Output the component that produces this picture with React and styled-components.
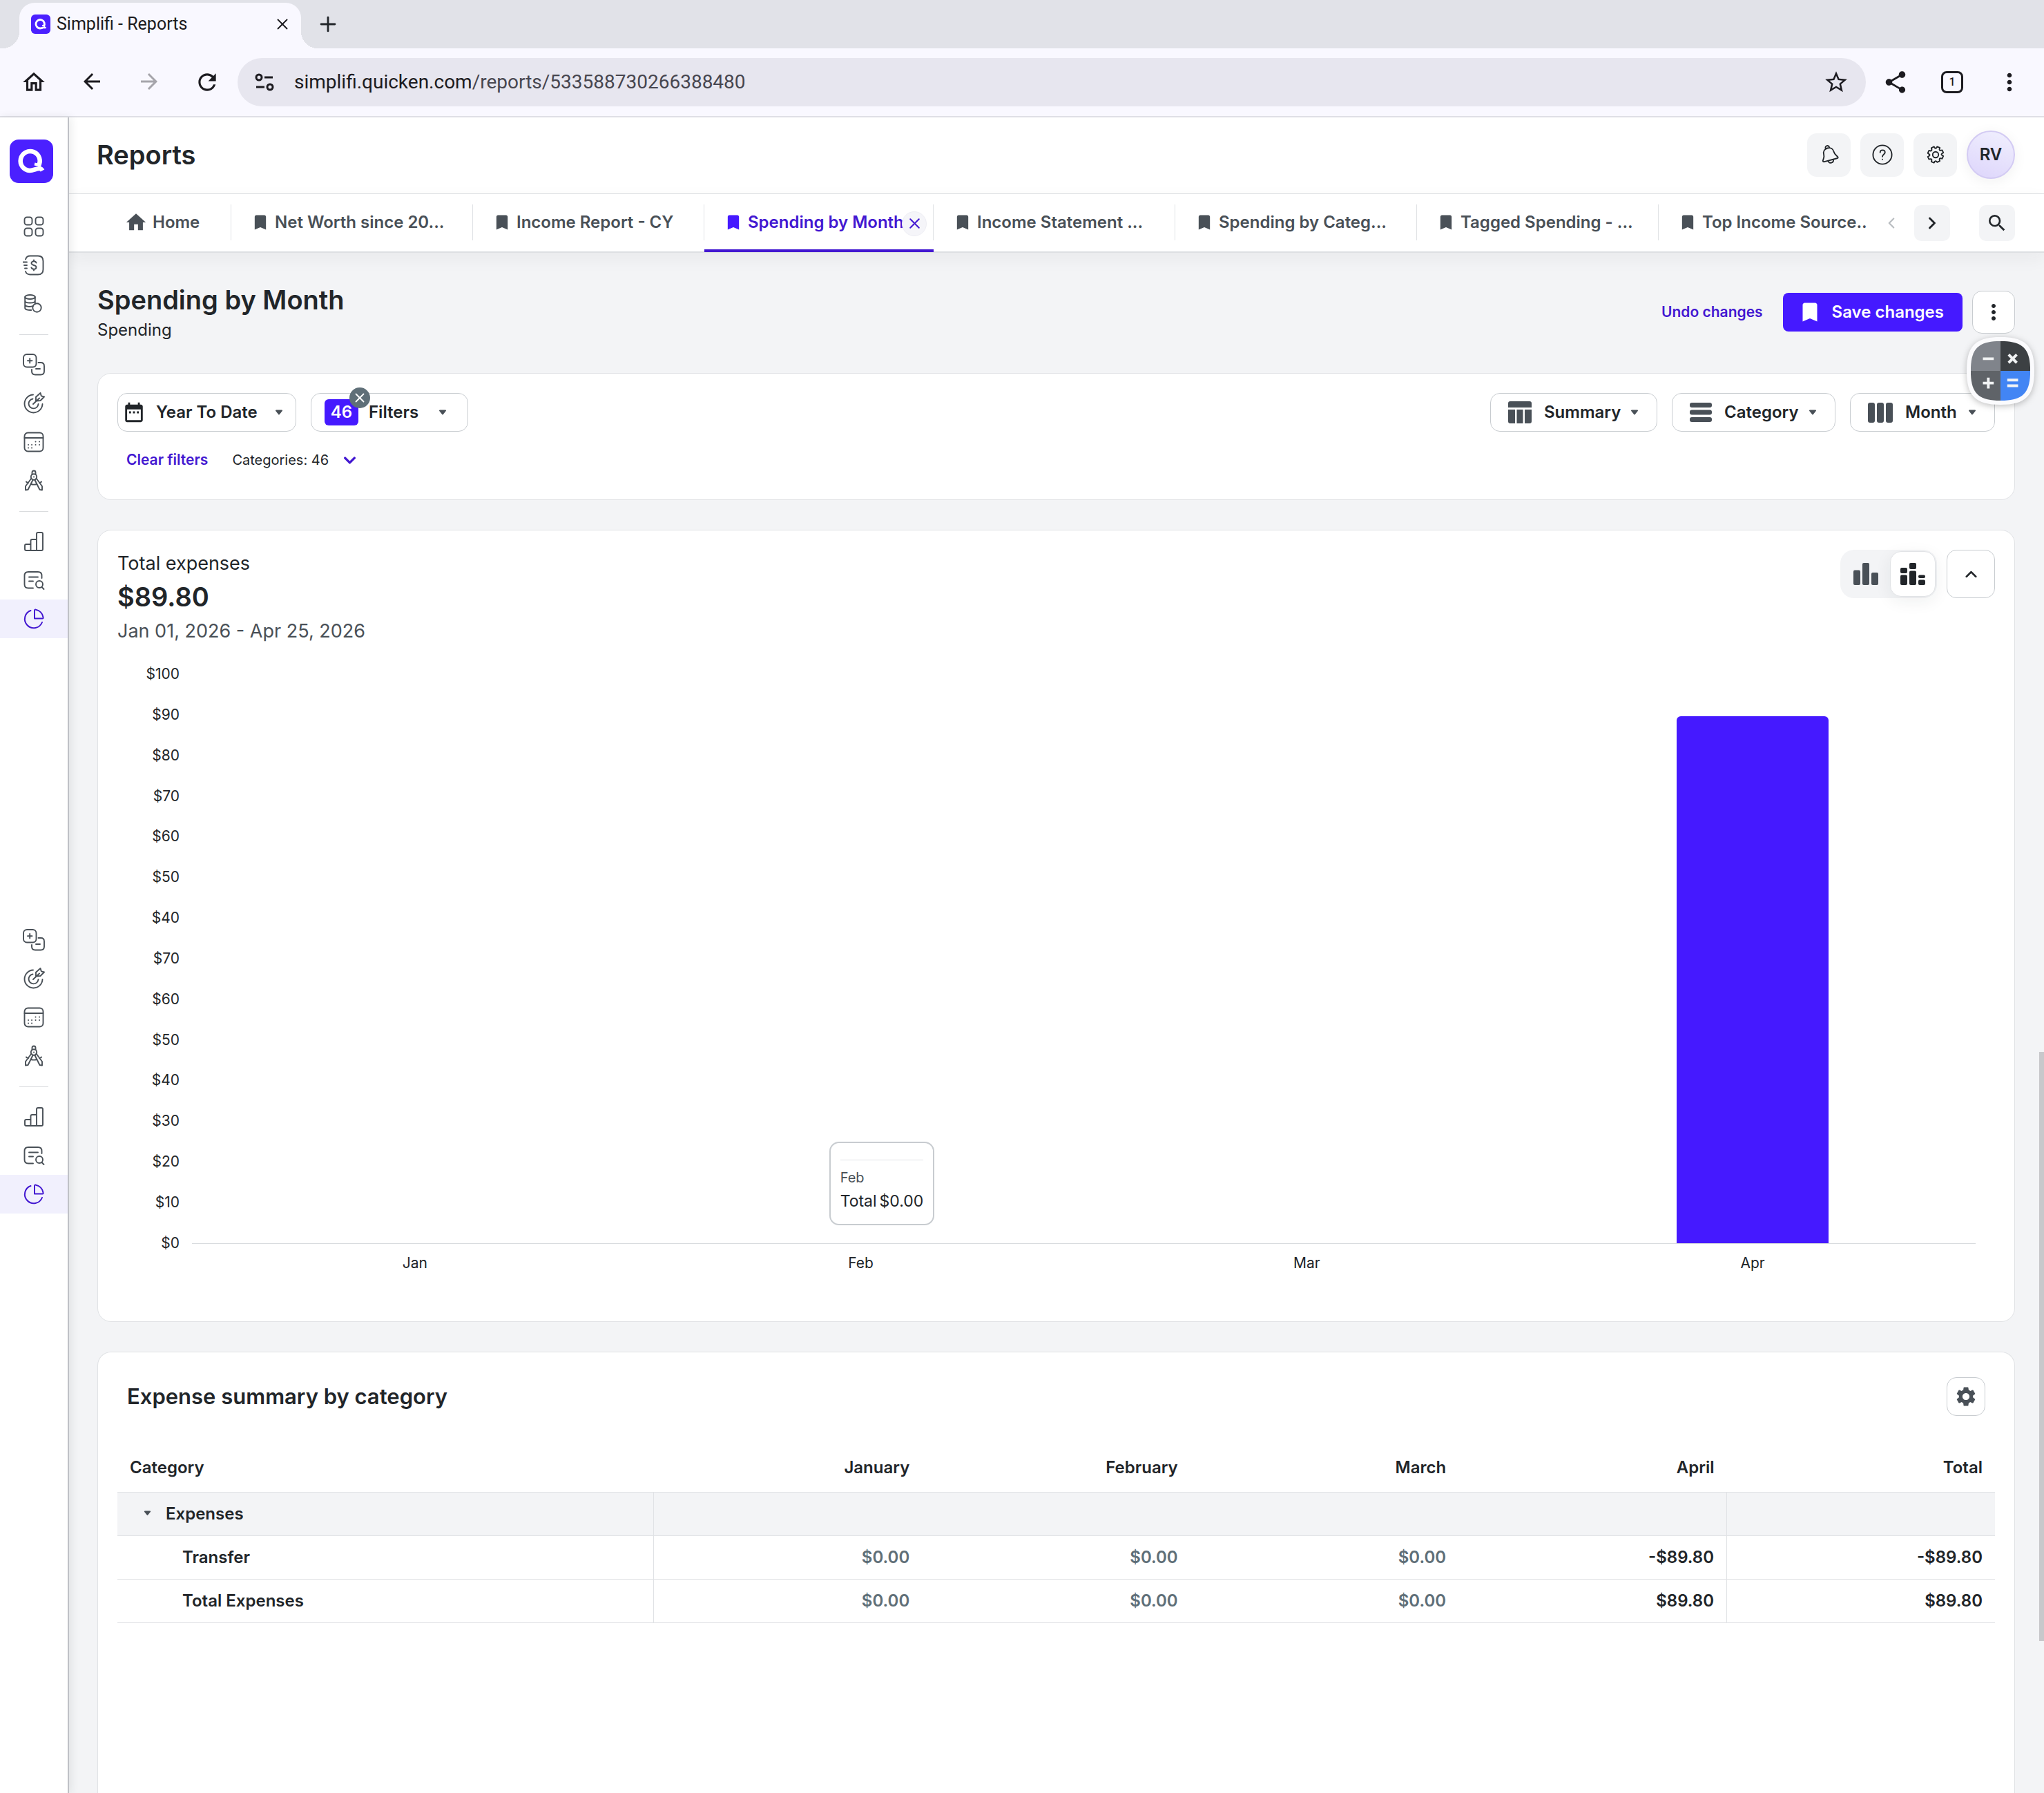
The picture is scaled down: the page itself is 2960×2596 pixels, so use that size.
import React, { useState } from 'react';
import styled, { createGlobalStyle, css } from 'styled-components';
import {
  MdArrowBack,
  MdArrowForward,
  MdBookmark,
  MdDateRange,
  MdHome,
  MdMoreVert,
  MdOutlineHome,
  MdRefresh,
  MdSearch,
  MdSettings,
  MdShare,
  MdStarOutline,
} from 'react-icons/md';
import { LuChevronDown, LuChevronLeft, LuChevronRight, LuChevronUp, LuPlus, LuX } from 'react-icons/lu';

const colors = {
  brand: '#4519ff',
  link: '#4318d1',
  text: '#212529',
  muted: '#495057',
  faint: '#5f6f78',
  line: '#e0e2e5',
  border: '#c8ccd0',
  page: '#f3f4f6',
  chrome: '#f9f8ff',
};

const GlobalStyle = createGlobalStyle`
  *, *::before, *::after {
    box-sizing: border-box;
  }

  body {
    margin: 0;
    background: ${colors.page};
    color: ${colors.text};
    font-family: Inter, 'Open Sans', sans-serif;
    font-size: 24px;
    line-height: 36px;
  }

  button {
    margin: 0;
    padding: 0;
    border: 0;
    background: none;
    color: inherit;
    font: inherit;
    cursor: pointer;
  }

  a {
    color: inherit;
    text-decoration: none;
  }

  h1, h2, p {
    margin: 0;
  }

  svg {
    display: block;
    flex-shrink: 0;
  }
`;

const Page = styled.div`
  position: relative;
  display: flex;
  flex-direction: column;
  min-height: 100vh;
`;

/* Browser frame */

const TabStrip = styled.div`
  display: flex;
  align-items: flex-end;
  height: 70px;
  padding-left: 28px;
  background: #e1e2e8;
  font-family: Roboto, sans-serif;
`;

const BrowserTab = styled.div`
  position: relative;
  display: flex;
  align-items: center;
  width: 408px;
  height: 66px;
  padding: 0 14px 4px 17px;
  border-radius: 22px 22px 0 0;
  background: ${colors.chrome};
  color: #1c1b20;

  &::before,
  &::after {
    content: '';
    position: absolute;
    bottom: 0;
    width: 24px;
    height: 24px;
  }

  &::before {
    right: 100%;
    background: radial-gradient(circle at 0 0, transparent 24px, ${colors.chrome} 24px);
  }

  &::after {
    left: 100%;
    background: radial-gradient(circle at 100% 0, transparent 24px, ${colors.chrome} 24px);
  }
`;

const TabTitle = styled.span`
  flex: 1;
  margin-left: 9px;
  font-size: 25px;
`;

const NewTabButton = styled.button`
  display: flex;
  align-items: center;
  height: 66px;
  margin-left: 22px;
  padding-bottom: 4px;
`;

const Toolbar = styled.div`
  display: flex;
  align-items: center;
  height: 100px;
  padding: 0 30px;
  border-bottom: 2px solid #dfdfe6;
  background: ${colors.chrome};
  color: #1c1b20;
`;

const NavButtons = styled.div`
  display: flex;
  gap: 47px;
  width: 314px;
`;

const ToolButton = styled.button`
  display: flex;
  color: ${({ $dim }) => ($dim ? '#a6a5ab' : '#1c1b20')};
`;

const AddressBar = styled.div`
  display: flex;
  flex: 1;
  align-items: center;
  height: 70px;
  padding: 0 24px;
  border-radius: 35px;
  background: #e7e6ef;
  font-family: Roboto, sans-serif;
  font-size: 28px;
`;

const Url = styled.span`
  flex: 1;
  margin-left: 28px;

  span {
    color: #47464f;
  }
`;

const ToolbarEnd = styled.div`
  display: flex;
  align-items: center;
  gap: 47px;
  margin-left: 24px;
`;

const TabCount = styled.button`
  display: flex;
  align-items: center;
  justify-content: center;
  width: 32px;
  height: 32px;
  border: 3px solid #1c1b20;
  border-radius: 8px;
  font-family: Roboto, sans-serif;
  font-size: 16px;
  font-weight: 500;
  line-height: 20px;
`;

/* App frame */

const AppShell = styled.div`
  display: flex;
  flex: 1;
`;

const Sidebar = styled.nav`
  position: relative;
  z-index: 2;
  flex: 0 0 100px;
  padding-top: 32px;
  border-right: 2px solid #bfc1c6;
  background: #fff;
  box-shadow: 2px 0 12px rgba(33, 37, 41, 0.1);
`;

const LogoLink = styled.a`
  display: block;
  width: 63px;
  margin: 0 0 35px 14px;
`;

const SideGroup = styled.div`
  & + &::before {
    content: '';
    display: block;
    width: 42px;
    height: 1px;
    margin: 16px auto 15px;
    background: #d9dbde;
  }
`;

const SideStack = styled.div`
  & + & {
    margin-top: 409px;
  }
`;

const SideLink = styled.a`
  display: flex;
  align-items: center;
  justify-content: center;
  height: 56px;
  background: ${({ $active }) => ($active ? '#f1f0fd' : 'transparent')};
  color: ${({ $active }) => ($active ? colors.link : colors.muted)};
`;

const Content = styled.div`
  display: flex;
  flex: 1;
  flex-direction: column;
  min-width: 0;
`;

const Header = styled.header`
  display: flex;
  align-items: center;
  justify-content: space-between;
  height: 111px;
  padding: 0 42px 2px 40px;
  border-bottom: 1px solid ${colors.line};
  background: #fff;
`;

const PageTitle = styled.h1`
  font-size: 38px;
  font-weight: 600;
  line-height: 48px;
`;

const HeaderActions = styled.div`
  display: flex;
  align-items: center;
  gap: 14px;
`;

const SoftButton = styled.button`
  display: flex;
  align-items: center;
  justify-content: center;
  width: ${({ $size, $plain }) => ($plain ? 66 : $size)}px;
  height: ${({ $size }) => $size}px;
  border-radius: ${({ $size }) => ($size > 60 ? 14 : 10)}px;
  background: ${({ $plain }) => ($plain ? 'none' : colors.page)};
  color: ${({ $plain }) => ($plain ? '#b9bdc1' : colors.text)};
`;

const Avatar = styled.button`
  width: 70px;
  height: 70px;
  border: 2px solid #d3cbf3;
  border-radius: 50%;
  background: linear-gradient(200deg, #f1f0fe, #ddd5fb);
  box-shadow: 0 4px 20px rgba(33, 37, 41, 0.06);
  font-weight: 600;
`;

const TabBar = styled.div`
  position: relative;
  z-index: 1;
  display: flex;
  align-items: center;
  height: 85px;
  padding: 0 42px 0 52px;
  border-bottom: 2px solid #dddfe2;
  background: #fff;
  box-shadow: 0 8px 24px rgba(33, 37, 41, 0.05);
`;

const Tabs = styled.nav`
  display: flex;
  flex: 1;
  overflow: hidden;
`;

const ReportTab = styled.a`
  position: relative;
  display: flex;
  flex: 0 0 ${({ $width }) => $width}px;
  align-items: center;
  gap: 7px;
  height: 84px;
  padding: 0 30px 2px 28px;
  color: ${({ $active }) => ($active ? colors.link : colors.muted)};
  font-weight: 600;
  white-space: nowrap;

  &:not(:last-child)::after {
    content: '';
    position: absolute;
    top: 15px;
    right: 0;
    width: 1px;
    height: 52px;
    background: ${colors.line};
  }

  ${({ $active }) => $active && css`
    border-bottom: 4px solid ${colors.link};
    padding-top: 2px;
    padding-bottom: 0;

    svg {
      color: ${colors.brand};
    }
  `}
`;

const TabClose = styled.button`
  position: absolute;
  top: 25px;
  right: 10px;
  display: flex;
  align-items: center;
  justify-content: center;
  width: 36px;
  height: 36px;
  border: 1px solid #eeeef4;
  border-radius: 50%;
  background: #f5f5f9;

  svg {
    color: ${colors.link};
  }
`;

const TabControls = styled.div`
  display: flex;
  align-items: center;

  ${SoftButton}:last-child {
    margin-left: 42px;
  }
`;

const Main = styled.main`
  display: flex;
  flex: 1;
  flex-direction: column;
  gap: 43px;
  padding: 42px 42px 0 41px;
`;

const ReportHead = styled.div`
  display: flex;
  align-items: center;
  justify-content: space-between;
`;

const ReportTitle = styled.h2`
  font-size: 38px;
  font-weight: 600;
  line-height: 52px;
`;

const Actions = styled.div`
  display: flex;
  align-items: center;
`;

const TextButton = styled.button`
  color: ${colors.link};
  font-size: 21px;
  font-weight: 600;
`;

const SaveButton = styled.button`
  display: flex;
  align-items: center;
  gap: 14px;
  height: 56px;
  margin: 0 14px 0 29px;
  padding: 0 27px 0 21px;
  border-radius: 8px;
  background: ${colors.brand};
  color: #fff;
  font-weight: 600;
`;

const OutlineButton = styled.button`
  display: flex;
  align-items: center;
  justify-content: center;
  width: ${({ $size }) => $size}px;
  height: ${({ $size }) => $size}px;
  border: 1px solid ${colors.border};
  border-radius: 14px;
  background: #fff;
  color: ${({ $muted }) => ($muted ? colors.muted : colors.text)};
`;

const Card = styled.section`
  padding: 28px;
  border: 1px solid ${colors.line};
  border-radius: 20px;
  background: #fff;
`;

/* Filters */

const FilterCard = styled(Card)`
  margin-top: 1px;
  padding-bottom: 39px;
`;

const FilterRow = styled.div`
  display: flex;
  gap: 21px;
`;

const Spacer = styled.div`
  flex: 1;
`;

const Picker = styled.button`
  display: flex;
  align-items: center;
  width: ${({ $width }) => $width}px;
  height: 56px;
  padding: 0 ${({ $end }) => $end || 26}px 0 ${({ $inset }) => $inset || 25}px;
  border: 1px solid ${colors.border};
  border-radius: 14px;
  font-weight: 600;

  > span:last-of-type {
    flex: 1;
    margin-left: ${({ $gap }) => $gap || 18}px;
    text-align: left;
    white-space: nowrap;
  }
`;

const PickerWrap = styled.div`
  position: relative;
`;

const CountBadge = styled.span`
  width: 49px;
  border-radius: 6px;
  background: ${colors.brand};
  color: #fff;
  line-height: 38px;
  text-align: center;
`;

const BadgeClear = styled.button`
  position: absolute;
  top: -8px;
  left: 56px;
  display: flex;
  align-items: center;
  justify-content: center;
  width: 30px;
  height: 30px;
  border-radius: 50%;
  background: ${colors.faint};
  color: #fff;
`;

const AppliedRow = styled.div`
  display: flex;
  align-items: center;
  margin: 23px 0 0 13px;

  p {
    margin: 0 17px 0 35px;
    font-size: 20px;
  }
`;

const ChevronButton = styled.button`
  color: ${colors.link};
`;

/* Chart */

const ChartCard = styled(Card)`
  padding-bottom: 70px;
`;

const ChartHead = styled.div`
  display: flex;
  align-items: flex-start;
  justify-content: space-between;
`;

const ChartLabel = styled.p`
  font-size: 27px;
  line-height: 40px;
`;

const ChartTotal = styled.p`
  font-size: 38px;
  font-weight: 600;
  line-height: 56px;
`;

const ChartDates = styled.p`
  color: ${colors.muted};
  font-size: 27px;
  line-height: 44px;
`;

const ChartControls = styled.div`
  display: flex;
  gap: 14px;
`;

const Segmented = styled.div`
  display: flex;
  align-items: center;
  height: 70px;
  padding: 2px;
  border-radius: 20px;
  background: ${colors.page};
`;

const Segment = styled.button`
  display: flex;
  align-items: center;
  justify-content: center;
  width: ${({ $active }) => ($active ? 66 : 70)}px;
  height: 66px;
  border: 1px solid ${({ $active }) => ($active ? '#e1e3e6' : 'transparent')};
  border-radius: 16px;
  background: ${({ $active }) => ($active ? '#fff' : 'none')};
  box-shadow: ${({ $active }) => ($active ? '0 6px 24px rgba(33, 37, 41, 0.07)' : 'none')};
  color: ${({ $active }) => ($active ? colors.text : colors.muted)};
`;

const Chart = styled.div`
  display: grid;
  grid-template-columns: 90px 1fr;
  column-gap: 18px;
  margin-top: 25px;
  padding-right: 28px;
  font-size: 21px;
`;

const YAxis = styled.div`
  display: flex;
  flex-direction: column;
  justify-content: space-between;
  height: 854px;
  line-height: 30px;
  text-align: right;
`;

const Plot = styled.div`
  position: relative;
  display: grid;
  grid-template-columns: repeat(${({ $count }) => $count}, 1fr);
  align-items: end;
  justify-items: center;
  height: 825px;
  margin-top: 15px;
  border-bottom: 1px solid #d8dbde;
`;

const Bar = styled.div`
  width: 34%;
  border-radius: 6px 6px 0 0;
  background: ${colors.brand};
`;

const XAxis = styled.div`
  display: grid;
  grid-column: 2;
  grid-template-columns: repeat(${({ $count }) => $count}, 1fr);
  line-height: 28px;
  text-align: center;
`;

const Tooltip = styled.div`
  position: absolute;
  bottom: 26px;
  left: calc(37.5% - 46px);
  padding: 24px 14px 15px;
  border: 2px solid ${colors.border};
  border-radius: 14px;
  background: #fff;

  p {
    padding-top: 9px;
    border-top: 1px solid ${colors.line};
    color: ${colors.muted};
    font-size: 20px;
    line-height: 32px;
  }

  div {
    display: flex;
    gap: 4px;
    font-size: 23px;
    line-height: 36px;
  }
`;

/* Summary table */

const TableCard = styled(Card)`
  flex: 1;
  border-bottom: 0;
  border-radius: 20px 20px 0 0;
`;

const TableHead = styled.div`
  display: flex;
  align-items: center;
  justify-content: space-between;
  padding: 8px 14px 41px;
`;

const TableTitle = styled.h2`
  font-size: 31px;
  font-weight: 600;
`;

const Table = styled.table`
  width: 100%;
  border-collapse: collapse;
  table-layout: fixed;
  font-weight: 600;

  th,
  td {
    height: 63px;
    padding: 0 18px;
    border-bottom: 1px solid ${colors.line};
    font-weight: 600;
    text-align: right;
  }

  thead th {
    height: 69px;
  }

  th:first-child {
    width: 28.57%;
    text-align: left;
  }

  tbody th:first-child,
  tbody td:nth-child(5) {
    border-right: 1px solid ${colors.line};
  }
`;

const GroupRow = styled.tr`
  background: ${colors.page};
`;

const RowLabel = styled.span`
  display: flex;
  align-items: center;
  gap: 21px;
  padding-left: ${({ $depth }) => ($depth ? 76 : 20)}px;
`;

const Amount = styled.td`
  color: ${({ $zero }) => ($zero ? colors.faint : colors.text)};
`;

/* Overlays */

const CalculatorBubble = styled.button`
  position: absolute;
  z-index: 3;
  top: 488px;
  right: 14px;
  filter: drop-shadow(0 2px 5px rgba(0, 0, 0, 0.25));
`;

const ScrollThumb = styled.div`
  position: absolute;
  top: 1523px;
  right: 0;
  width: 7px;
  height: 853px;
  background: #c8c8cb;
`;

/* Icons */

const Line = ({ size = 32, width = 1.9, children }) => (
  <svg
    width={size}
    height={size}
    viewBox="0 0 32 32"
    fill="none"
    stroke="currentColor"
    strokeWidth={width}
    strokeLinecap="round"
    strokeLinejoin="round"
    aria-hidden="true"
  >
    {children}
  </svg>
);

const Logo = ({ size }) => (
  <svg width={size} height={size} viewBox="0 0 63 63" aria-hidden="true">
    <rect width="63" height="63" rx="13" fill="#4b20ff" />
    <path
      d="M41.5 38.5A14 14 0 1 0 29 45c6 0 9-3 14-3 2.5 0 3.5 1.2 4.500 3"
      fill="none"
      stroke="#fff"
      strokeWidth="6.5"
    />
    <path d="M36 35.500l7 1.500" fill="none" stroke="#fff" strokeWidth="4" />
  </svg>
);

const Caret = ({ size = 12 }) => (
  <svg width={size} height={size * 0.75} viewBox="0 0 12 9" aria-hidden="true">
    <path d="M2 1.500h8L6 6.500z" fill={colors.muted} stroke={colors.muted} strokeWidth="2" strokeLinejoin="round" />
  </svg>
);

const TuneIcon = () => (
  <svg width="30" height="30" viewBox="0 0 30 30" fill="none" stroke="currentColor" strokeWidth="3" aria-hidden="true">
    <circle cx="7" cy="8" r="4" />
    <path d="M15 8h12M3 22h12" />
    <circle cx="23" cy="22" r="4" />
  </svg>
);

const sideIcons = {
  dashboard: (
    <Line>
      <rect x="2.5" y="2.5" width="11" height="11" rx="3.5" />
      <rect x="18.5" y="2.5" width="11" height="11" rx="3.5" />
      <rect x="2.5" y="18.5" width="11" height="11" rx="3.5" />
      <rect x="18.5" y="18.5" width="11" height="11" rx="3.5" />
    </Line>
  ),
  spending: (
    <Line>
      <path d="M4 7.500C5 4 7 2.500 10.500 2.500H22q7.500 0 7.500 7.500v12q0 7.500-7.500 7.500H10.500C7 29.500 5 28 4 25" />
      <path d="M0 11.500h6M2 16h4M3 20.500h3" />
      <path d="M19.500 12.500c-.6-1.600-1.900-2.200-3.500-2.200-2 0-3.500 1-3.500 2.800 0 4 7 1.800 7 5.800 0 1.800-1.500 2.800-3.500 2.800-1.700 0-3-.7-3.600-2.300M16 8.500v1.800M16 21.700v1.800" />
    </Line>
  ),
  accounts: (
    <Line>
      <ellipse cx="10.500" cy="6" rx="7.3" ry="3" />
      <path d="M3.200 6v16c0 2 4 3.300 9 3M17.800 6v10M3.200 11.500c0 4 14.600 4 14.600 0M3.200 17c0 3 7.500 3.600 11.500 2.200" />
      <circle cx="20.500" cy="21.500" r="6.2" />
    </Line>
  ),
  income: (
    <Line>
      <rect x="1" y="1" width="18.500" height="18.500" rx="5" />
      <path d="M10.200 7v6.500M7 10.200h6.500M22.500 13H26q5 0 5 5v7.500q0 5-5 5h-8q-5 0-5-5V23M19 22h6" />
    </Line>
  ),
  goals: (
    <Line>
      <path d="M15 3.500A13 13 0 1 0 28.500 17M14.500 9.500a7 7 0 1 0 8 7.500M15 17l9-8.500M19 12.500V6.800L25.500 1l1.300 4.300L31 6.500 25.500 12z" />
    </Line>
  ),
  calendar: (
    <Line>
      <rect x="2.5" y="2.5" width="27" height="27" rx="5" />
      <path d="M2.500 10h27" />
      <path d="M18.500 15.500h.1M24 15.500h.1M18.500 20h.1M24 20h.1M8 20h.1M13 20h.1M8 24.500h.1M13 24.500h.1" />
    </Line>
  ),
  planner: (
    <Line>
      <circle cx="16" cy="10.500" r="4.2" />
      <path d="M13.500 7V4q0-2.500 2.500-2.500T18.500 4v3M12.500 12.500L4 24v5.500l3.500-.5 7-14M19.500 12.500L28 24v5.500l-3.500-.5-7-14M5 17.500c1 1 2 1.500 3 1.800M27 17.500c-1 1-2 1.500-3 1.800M12 21c2.500.8 5.500.8 8 0M16 10.500h.1" />
    </Line>
  ),
  reports: (
    <Line>
      <path d="M5 29q-2 0-2-2v-5q0-2 2-2h6.500V15q0-2 2-2H20V5q0-2 2-2h5q2 0 2 2v22q0 2-2 2zM11.500 20v9M20 13v16" />
    </Line>
  ),
  search: (
    <Line>
      <path d="M15 27.500H8q-5.500 0-5.500-5.500V9.500Q2.500 4 8 4h14q5.500 0 5.500 5.500V13M9 11.500h13M9 17.500h6M27.500 26l3 3" />
      <circle cx="24" cy="22" r="5" />
    </Line>
  ),
  pie: (
    <Line width={2}>
      <path d="M11.500 4A13 13 0 1 0 28 21M17 4v11.500h11.500q1.500 0 1-2A13.500 13.500 0 0 0 19 2.700Q17 2.200 17 4z" />
    </Line>
  ),
};

const BellIcon = () => (
  <Line size={30} width={2}>
    <g transform="rotate(-15 16 16)">
      <path d="M16 5.500c-5 0-8 3.500-8 8 0 6-4 7.500-4 9.500 0 1.200.8 1.500 2 1.500h20c1.200 0 2-.3 2-1.500 0-2-4-3.500-4-9.500 0-4.500-3-8-8-8zM13 5.500c-.5-5 6.500-5 6 0M12 25c0 5 8 5 8 0" />
    </g>
  </Line>
);

const HelpIcon = () => (
  <Line size={30} width={2}>
    <circle cx="16" cy="16" r="14.500" />
    <path d="M12.500 12.500c0-4.800 7.500-4.800 7.500 0 0 3-4 3-4 6.500M16 23v.3" />
  </Line>
);

const GearIcon = () => (
  <Line size={30} width={2}>
    <circle cx="16" cy="16" r="4.500" />
    <path d="M13.500 3.500l1.500 2.300q1 1 2 0l1.500-2.300 4 1.700-.6 2.700q0 1.600 1.600 1.600l2.700-.6 1.800 4-2.400 1.600q-1 1 0 2l2.400 1.600-1.800 4-2.700-.6q-1.600 0-1.600 1.600l.6 2.700-4 1.700L17 26.200q-1-1-2 0l-1.500 2.300-4-1.700.6-2.700q0-1.600-1.600-1.600l-2.700.6-1.800-4 2.400-1.600q1-1 0-2L4 13.500l1.800-4 2.700.6q1.600 0 1.600-1.600l-.6-2.700z" />
  </Line>
);

const SummaryIcon = () => (
  <svg width="34" height="32" viewBox="0 0 34 32" fill={colors.muted} aria-hidden="true">
    <path d="M0 9V3q0-3 3-3h28q3 0 3 3v6zM0 12h10v20H3q-3 0-3-3zM12.500 12h9v20h-9zM24 12h10v17q0 3-3 3h-7z" />
  </svg>
);

const RowsIcon = () => (
  <svg width="32" height="28" viewBox="0 0 32 28" fill={colors.muted} aria-hidden="true">
    <rect width="32" height="7" rx="3" />
    <rect y="10.500" width="32" height="7" rx="3" />
    <rect y="21" width="32" height="7" rx="3" />
  </svg>
);

const ColumnsIcon = () => (
  <svg width="36" height="29" viewBox="0 0 36 29" fill={colors.muted} aria-hidden="true">
    <rect width="10" height="29" rx="3" />
    <rect x="13" width="10" height="29" rx="3" />
    <rect x="26" width="10" height="29" rx="3" />
  </svg>
);

const BarsIcon = () => (
  <svg width="36" height="32" viewBox="0 0 36 32" fill="currentColor" aria-hidden="true">
    <rect y="10.500" width="10" height="21.500" rx="2" />
    <rect x="13" width="10" height="32" rx="2" />
    <rect x="26" y="14" width="10" height="18" rx="2" />
  </svg>
);

const StackedIcon = () => (
  <svg width="36" height="32" viewBox="0 0 36 32" fill="currentColor" aria-hidden="true">
    <rect y="7" width="10" height="8" rx="2" />
    <rect y="17.500" width="10" height="14.500" rx="2" />
    <rect x="13" width="10" height="9" rx="2" />
    <rect x="13" y="11.500" width="10" height="20.500" rx="2" />
    <rect x="26" y="17.500" width="10" height="4.500" rx="2" />
    <rect x="26" y="24.500" width="10" height="7.500" rx="2" />
  </svg>
);

const CalculatorIcon = () => (
  <svg width="98" height="98" viewBox="0 0 100 100" aria-hidden="true">
    <clipPath id="calc-face">
      <path d="M50 6C83 6 94 17 94 50S83 94 50 94 6 83 6 50 17 6 50 6z" />
    </clipPath>
    <path d="M50 0C87 0 100 13 100 50S87 100 50 100 0 87 0 50 13 0 50 0z" fill="#fbfbfd" />
    <g clipPath="url(#calc-face)">
      <path d="M0 0h50v50H0z" fill="#80848b" />
      <path d="M50 0h50v50H50z" fill="#3c4043" />
      <path d="M0 50h50v50H0z" fill="#5f6368" />
      <path d="M50 50h50v50H50z" fill="#4285f4" />
    </g>
    <path
      d="M24 32h16M62 26l12 12M74 26l-12 12M24 68h16M32 60v16M60 63.500h16M60 72h16"
      stroke="#f1f3f4"
      strokeWidth="4"
    />
  </svg>
);

/* Data */

const planItems = ['income', 'goals', 'calendar', 'planner'];
const reportItems = ['reports', 'search', 'pie'];
const sideStacks = [[['dashboard', 'spending', 'accounts'], planItems, reportItems], [planItems, reportItems]];

const reportTabs = [
  { label: 'Home', width: 183, home: true },
  { label: 'Net Worth since 20...', width: 350 },
  { label: 'Income Report - CY', width: 335 },
  { label: 'Spending by Month', width: 332 },
  { label: 'Income Statement ...', width: 350 },
  { label: 'Spending by Categ...', width: 350 },
  { label: 'Tagged Spending - ...', width: 350 },
  { label: 'Top Income Source..', width: 350 },
];

const axisLabels = [100, 90, 80, 70, 60, 50, 40, 70, 60, 50, 40, 30, 20, 10, 0];

const months = [
  { label: 'Jan', share: 0 },
  { label: 'Feb', share: 0 },
  { label: 'Mar', share: 0 },
  { label: 'Apr', share: 92.6 },
];

const columns = ['Category', 'January', 'February', 'March', 'April', 'Total'];

const rows = [
  { label: 'Transfer', values: ['$0.00', '$0.00', '$0.00', '-$89.80', '-$89.80'] },
  { label: 'Total Expenses', values: ['$0.00', '$0.00', '$0.00', '$89.80', '$89.80'] },
];

const BrowserFrame = () => (
  <>
    <TabStrip>
      <BrowserTab>
        <Logo size={28} />
        <TabTitle>Simplifi - Reports</TabTitle>
        <ToolButton aria-label="Close tab">
          <LuX size={26} strokeWidth={1.75} />
        </ToolButton>
      </BrowserTab>
      <NewTabButton aria-label="New tab">
        <LuPlus size={34} strokeWidth={2} />
      </NewTabButton>
    </TabStrip>
    <Toolbar>
      <NavButtons>
        <ToolButton aria-label="Home page"><MdOutlineHome size={38} /></ToolButton>
        <ToolButton aria-label="Back"><MdArrowBack size={36} /></ToolButton>
        <ToolButton aria-label="Forward" $dim><MdArrowForward size={36} /></ToolButton>
        <ToolButton aria-label="Reload"><MdRefresh size={38} /></ToolButton>
      </NavButtons>
      <AddressBar>
        <TuneIcon />
        <Url>simplifi.quicken.com<span>/reports/533588730266388480</span></Url>
        <ToolButton aria-label="Bookmark this page"><MdStarOutline size={38} /></ToolButton>
      </AddressBar>
      <ToolbarEnd>
        <ToolButton aria-label="Share"><MdShare size={38} /></ToolButton>
        <TabCount>1</TabCount>
        <ToolButton aria-label="More"><MdMoreVert size={40} /></ToolButton>
      </ToolbarEnd>
    </Toolbar>
  </>
);

const SideNav = () => (
  <Sidebar>
    <LogoLink href="#" aria-label="Simplifi"><Logo size={63} /></LogoLink>
    {sideStacks.map((groups, i) => (
      <SideStack key={i}>
        {groups.map((items) => (
          <SideGroup key={items[0]}>
            {items.map((name) => (
              <SideLink key={name} href="#" aria-label={name} $active={name === 'pie'}>
                {sideIcons[name]}
              </SideLink>
            ))}
          </SideGroup>
        ))}
      </SideStack>
    ))}
  </Sidebar>
);

const ReportTabs = ({ current, onSelect }) => (
  <TabBar>
    <Tabs>
      {reportTabs.map(({ label, width, home }) => (
        <ReportTab
          key={label}
          href="#"
          $width={width}
          $active={label === current}
          onClick={() => onSelect(label)}
        >
          {home ? <MdHome size={34} /> : <MdBookmark size={28} />}
          {label}
          {label === current && (
            <TabClose aria-label="Close report"><LuX size={25} /></TabClose>
          )}
        </ReportTab>
      ))}
    </Tabs>
    <TabControls>
      <SoftButton $size={52} $plain aria-label="Previous tabs"><LuChevronLeft size={26} /></SoftButton>
      <SoftButton $size={52} aria-label="Next tabs"><LuChevronRight size={28} strokeWidth={2.5} /></SoftButton>
      <SoftButton $size={52} aria-label="Search reports"><MdSearch size={32} /></SoftButton>
    </TabControls>
  </TabBar>
);

const Filters = () => (
  <FilterCard>
    <FilterRow>
      <Picker $width={259} $inset={6} $end={18} $gap={15}>
        <MdDateRange size={34} color={colors.text} />
        <span>Year To Date</span>
        <Caret />
      </Picker>
      <PickerWrap>
        <Picker $width={228} $inset={19} $end={30} $gap={15}>
          <CountBadge>46</CountBadge>
          <span>Filters</span>
          <Caret />
        </Picker>
        <BadgeClear aria-label="Remove all filters"><LuX size={22} /></BadgeClear>
      </PickerWrap>
      <Spacer />
      <Picker $width={242}><SummaryIcon /><span>Summary</span><Caret /></Picker>
      <Picker $width={237}><RowsIcon /><span>Category</span><Caret /></Picker>
      <Picker $width={210}><ColumnsIcon /><span>Month</span><Caret /></Picker>
    </FilterRow>
    <AppliedRow>
      <TextButton>Clear filters</TextButton>
      <p>Categories: 46</p>
      <ChevronButton aria-label="Show categories"><LuChevronDown size={27} strokeWidth={3} /></ChevronButton>
    </AppliedRow>
  </FilterCard>
);

const ExpenseChart = () => {
  const [stacked, setStacked] = useState(true);

  return (
    <ChartCard>
      <ChartHead>
        <div>
          <ChartLabel>Total expenses</ChartLabel>
          <ChartTotal>$89.80</ChartTotal>
          <ChartDates>Jan 01, 2026 - Apr 25, 2026</ChartDates>
        </div>
        <ChartControls>
          <Segmented>
            <Segment $active={!stacked} onClick={() => setStacked(false)} aria-label="Bars"><BarsIcon /></Segment>
            <Segment $active={stacked} onClick={() => setStacked(true)} aria-label="Stacked bars"><StackedIcon /></Segment>
          </Segmented>
          <OutlineButton $size={70} aria-label="Collapse chart"><LuChevronUp size={27} strokeWidth={2.5} /></OutlineButton>
        </ChartControls>
      </ChartHead>
      <Chart>
        <YAxis>
          {axisLabels.map((value, i) => <span key={i}>${value}</span>)}
        </YAxis>
        <Plot $count={months.length}>
          {months.map(({ label, share }) => <Bar key={label} style={{ height: `${share}%` }} />)}
          <Tooltip>
            <p>Feb</p>
            <div><span>Total</span><span>$0.00</span></div>
          </Tooltip>
        </Plot>
        <XAxis $count={months.length}>
          {months.map(({ label }) => <span key={label}>{label}</span>)}
        </XAxis>
      </Chart>
    </ChartCard>
  );
};

const SummaryTable = () => (
  <TableCard>
    <TableHead>
      <TableTitle>Expense summary by category</TableTitle>
      <OutlineButton $size={56} $muted aria-label="Table settings"><MdSettings size={34} /></OutlineButton>
    </TableHead>
    <Table>
      <thead>
        <tr>{columns.map((name) => <th key={name} scope="col">{name}</th>)}</tr>
      </thead>
      <tbody>
        <GroupRow>
          <th scope="row"><RowLabel><Caret size={11} />Expenses</RowLabel></th>
          <td /><td /><td /><td /><td />
        </GroupRow>
        {rows.map(({ label, values }) => (
          <tr key={label}>
            <th scope="row"><RowLabel $depth={1}>{label}</RowLabel></th>
            {values.map((value, i) => <Amount key={i} $zero={value === '$0.00'}>{value}</Amount>)}
          </tr>
        ))}
      </tbody>
    </Table>
  </TableCard>
);

const App = () => {
  const [report, setReport] = useState('Spending by Month');

  return (
    <Page>
      <GlobalStyle />
      <BrowserFrame />
      <AppShell>
        <SideNav />
        <Content>
          <Header>
            <PageTitle>Reports</PageTitle>
            <HeaderActions>
              <SoftButton $size={63} aria-label="Notifications"><BellIcon /></SoftButton>
              <SoftButton $size={63} aria-label="Help"><HelpIcon /></SoftButton>
              <SoftButton $size={63} aria-label="Settings"><GearIcon /></SoftButton>
              <Avatar>RV</Avatar>
            </HeaderActions>
          </Header>
          <ReportTabs current={report} onSelect={setReport} />
          <Main>
            <ReportHead>
              <div>
                <ReportTitle>Spending by Month</ReportTitle>
                <p>Spending</p>
              </div>
              <Actions>
                <TextButton>Undo changes</TextButton>
                <SaveButton><MdBookmark size={36} />Save changes</SaveButton>
                <OutlineButton $size={62} aria-label="More actions"><MdMoreVert size={36} /></OutlineButton>
              </Actions>
            </ReportHead>
            <Filters />
            <ExpenseChart />
            <SummaryTable />
          </Main>
        </Content>
      </AppShell>
      <CalculatorBubble aria-label="Calculator"><CalculatorIcon /></CalculatorBubble>
      <ScrollThumb />
    </Page>
  );
};

export default App;
